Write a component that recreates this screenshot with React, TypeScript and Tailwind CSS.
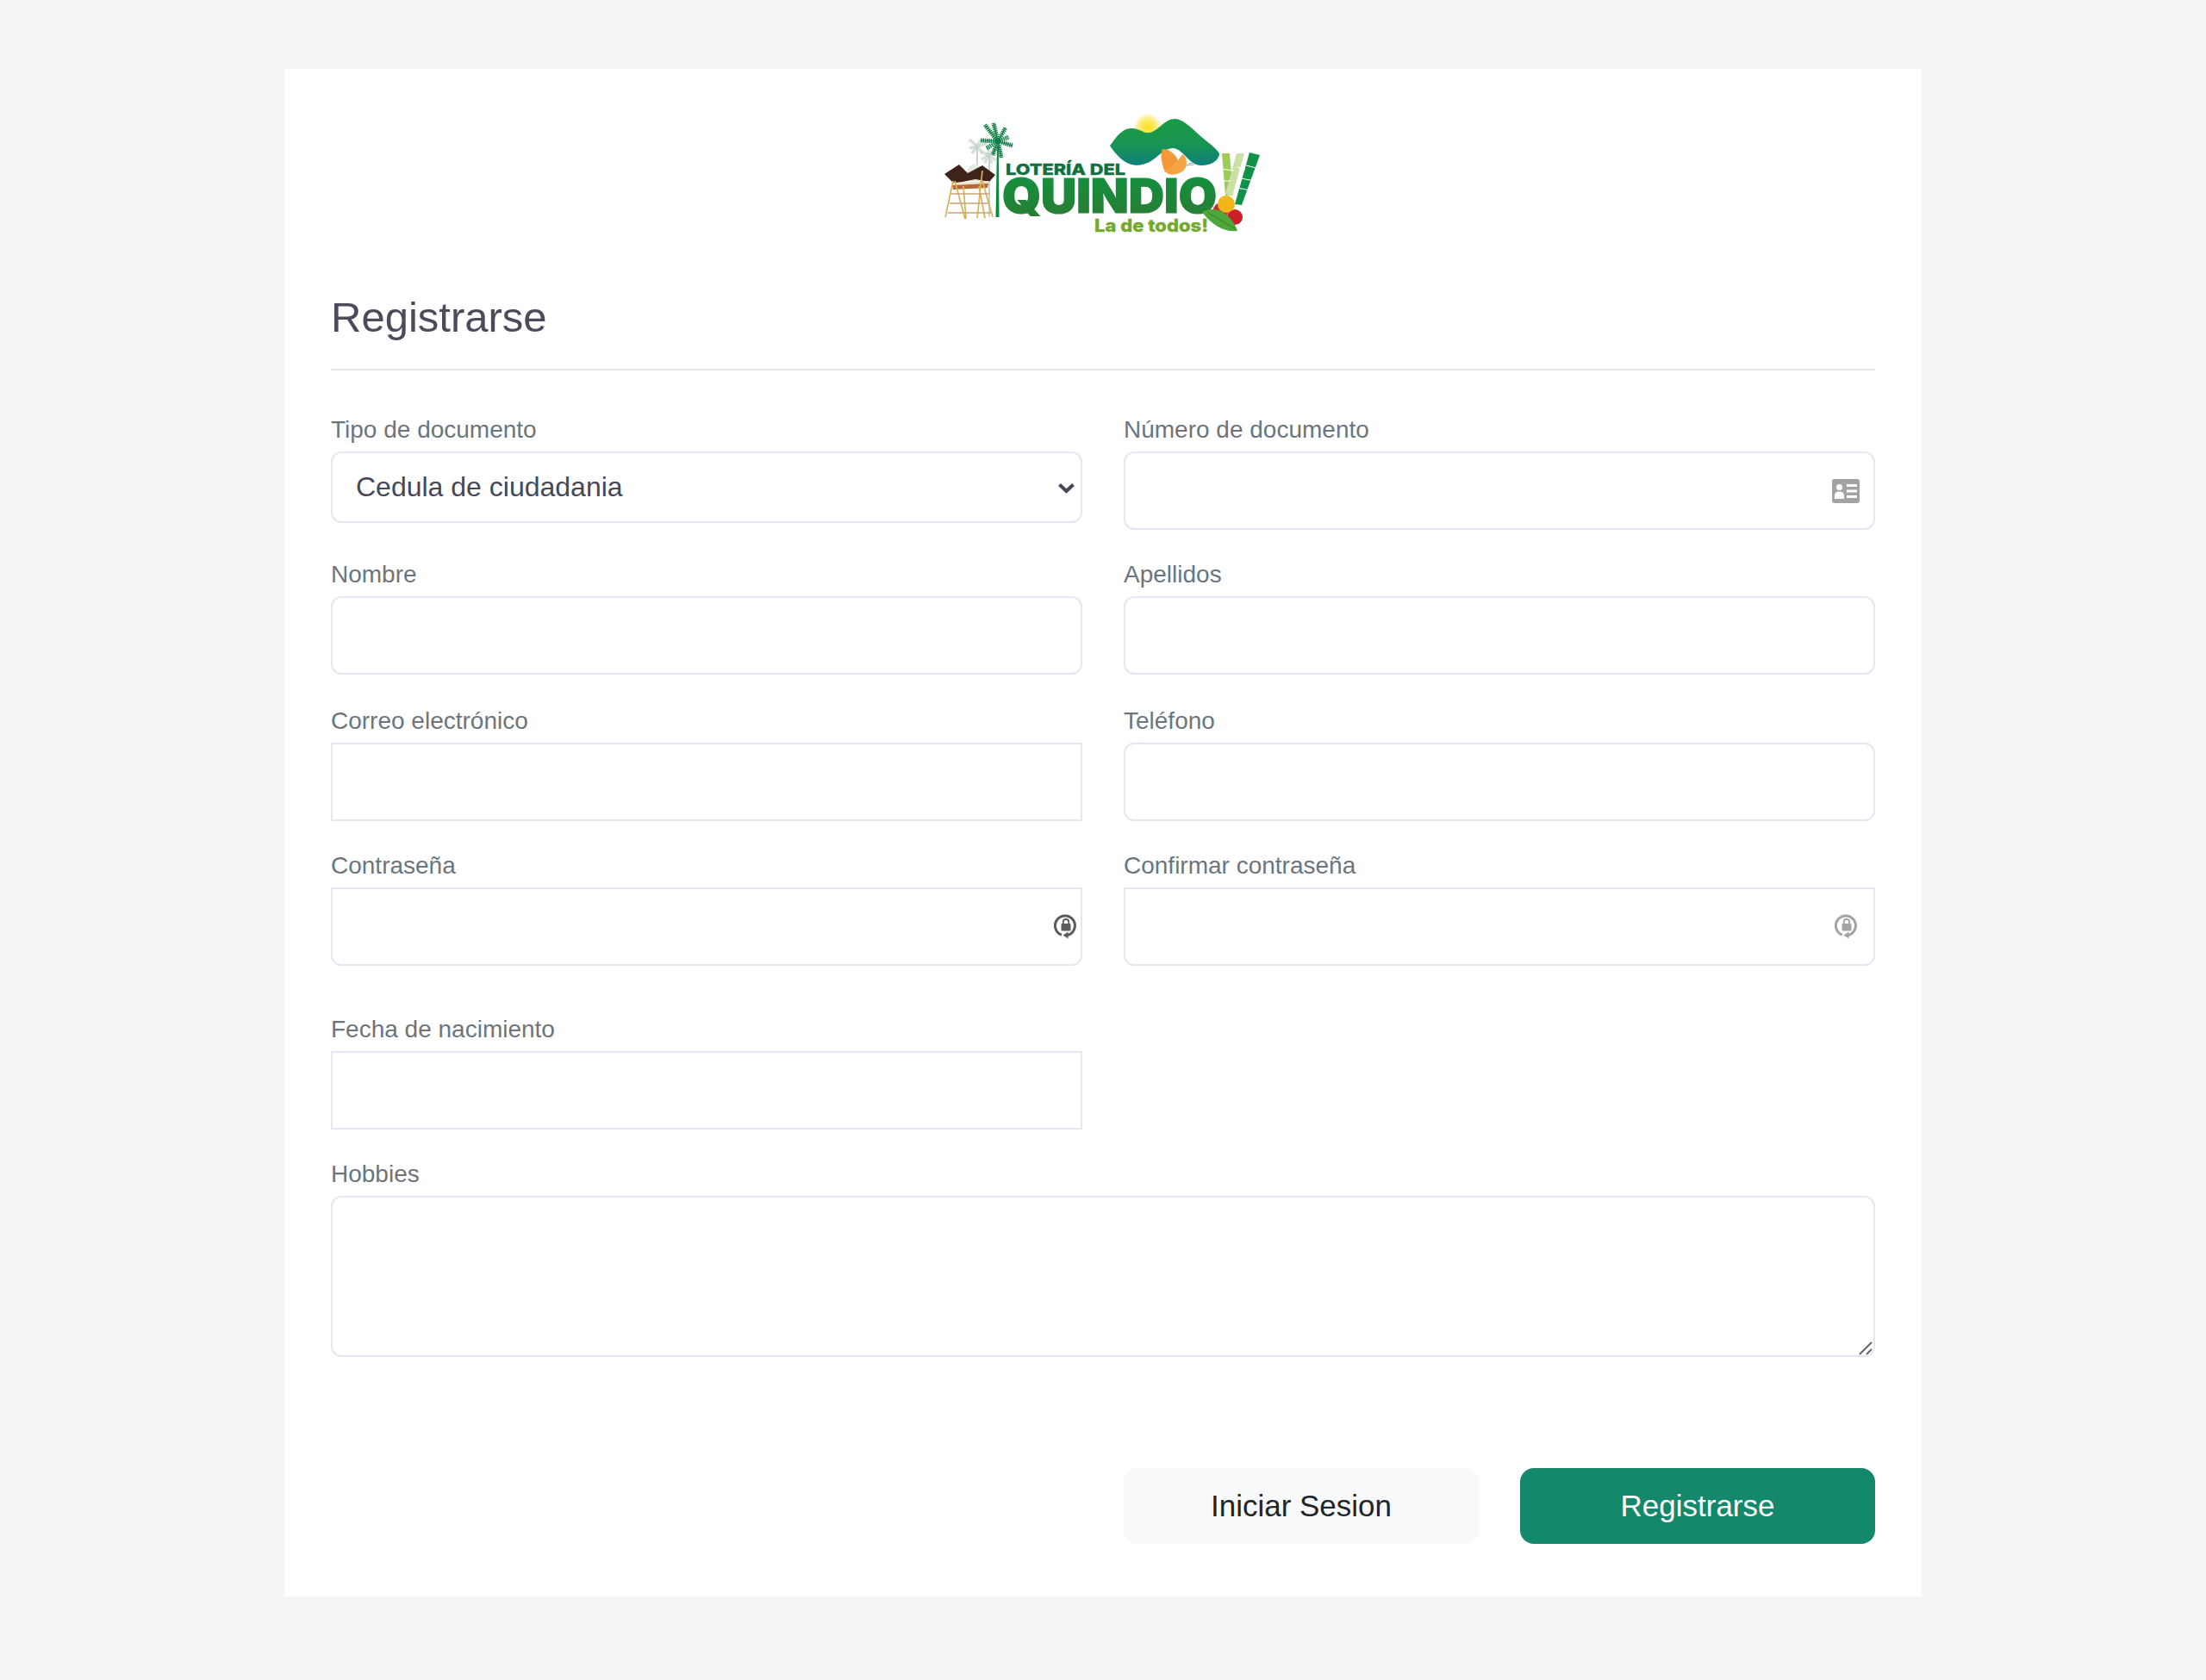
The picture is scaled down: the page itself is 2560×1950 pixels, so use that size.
function Logo() {
  return (
    <svg viewBox="0 0 440 180" className="block mx-auto w-[440px] h-[180px]" aria-label="Lotería del Quindío">
      <defs>
        <linearGradient id="mountain" x1="0" y1="0" x2="0" y2="1">
          <stop offset="0" stopColor="#1b9a45" />
          <stop offset="0.5" stopColor="#189650" />
          <stop offset="1" stopColor="#0f7f7a" />
        </linearGradient>
        <linearGradient id="quindio" x1="0" y1="0" x2="0" y2="1">
          <stop offset="0" stopColor="#0f9440" />
          <stop offset="1" stopColor="#2b7a32" />
        </linearGradient>
        <radialGradient id="sun">
          <stop offset="0" stopColor="#fbe020" />
          <stop offset="0.6" stopColor="#fcec70" />
          <stop offset="1" stopColor="#fffdf0" />
        </radialGradient>
      </defs>

      {/* gray palms */}
      <g stroke="#c3cfc6" fill="none">
        <path d="M74 62 L74 92 M88 70 L88 142" strokeWidth="1.8" />
        <path d="M74 60 L65 52 M74 60 L78 52 M74 60 L85 56 M74 60 L65 62 M74 60 L68 68 M74 60 L80 68 M87 70 L79 66 M87 70 L94 64 M87 70 L79 75 M87 70 L95 76 M87 70 L87 62 M87 70 L83 79 M87 70 L91 80" strokeWidth="3.5" strokeDasharray="1.4 0.7" />
      </g>

      {/* hut */}
      <path d="M60 92 Q70 70 82 90 L78 100 L60 100 Z" fill="#e3e8e2" />
      <path d="M36 92 L53 81 L63 91 L80 82 L95 93 L88 101 L72 98 L47 103 Z" fill="#3d2318" />
      <path d="M45 102 L88 100 L87 103 L46 105 Z" fill="#f0e4d0" />
      <path d="M45 105 L87 103 L86 108 L46 110 Z" fill="#b5683a" />
      <g stroke="#d9b25a" strokeWidth="1.7" fill="none">
        <path d="M46 100 L37 142 M48 100 L60 144 M58 106 L61 144 M80 88 L74 143 M80 100 L92 142 M76 106 L83 143" />
      </g>
      <path d="M44 115 L88 115 M42 126 L88 126 M40 137 L90 137" stroke="#c8a577" strokeWidth="1.3" />

      {/* main palm */}
      <path d="M97 60 L95.5 142 L99.5 142 L98.8 60 Z" fill="#0e8a3f" />
      <g stroke="#117f45" fill="none">
        <path d="M98 54 L83 35 M98 54 L93 33 M98 54 L107 38 M98 54 L78 53 M98 54 L115 59 M98 54 L102 73 M98 54 L92 70 M98 54 L111 49 M98 54 L85 62" strokeWidth="5" strokeDasharray="1.5 0.8" />
        <path d="M98 54 L83 35 M98 54 L93 33 M98 54 L107 38 M98 54 L78 53 M98 54 L115 59 M98 54 L102 73 M98 54 L92 70" strokeWidth="1.2" />
      </g>

      {/* sun and mountain */}
      <circle cx="272" cy="38" r="16" fill="url(#sun)" />
      <path
        d="M228 59 C234 52 240 40 252 39 C262 38 266 45 274 44 C284 42 292 28 303 28 C312 28 320 36 330 45 C338 53 350 60 355 68 C355 76 346 82 334 82 C320 82 314 64 302 62 C292 61 284 72 274 78 C266 82 258 83 250 80 C242 77 232 66 228 59 Z"
        fill="url(#mountain)"
      />

      {/* butterfly */}
      <path d="M289 63 C296 62 306 70 307 77 L304 80 C300 84 296 88 292 90 C288 80 286 70 289 63 Z" fill="#f4983a" />
      <path d="M312 69 C318 72 318 82 315 86 C312 91 302 94 296 92 C292 91 293 87 297 85 C303 82 308 76 312 69 Z" fill="#f5a443" />
      <path d="M315 82 L326 81 M319 80 L325 79" stroke="#a8a8a8" strokeWidth="1.2" />

      {/* text */}
      <text x="107" y="93" fontFamily="Inter, sans-serif" fontWeight="800" fontSize="18" fill="#12703f" stroke="#12703f" strokeWidth="0.4" textLength="139" lengthAdjust="spacingAndGlyphs">LOTERÍA DEL</text>
      <text x="103" y="137" fontFamily="Inter, sans-serif" fontWeight="900" fontSize="55" fill="url(#quindio)" stroke="url(#quindio)" strokeWidth="1.2" textLength="249" lengthAdjust="spacingAndGlyphs">QUINDIO</text>
      <text x="210" y="159" fontFamily="Inter, sans-serif" fontWeight="800" fontSize="20" fill="#74a92c" stroke="#74a92c" strokeWidth="0.3" textLength="132" lengthAdjust="spacingAndGlyphs">La de todos!</text>

      {/* canes */}
      <path d="M358 68 L367 68 L371 116 L362 117 Z" fill="#9ecb55" />
      <path d="M375 68 L384 68 L370 118 L362 115 Z" fill="#cbe0a4" />
      <path d="M390 67 L402 70 L381 128 L373 127 Z" fill="#0f9148" />
      <path d="M356 86 L372 88 M357 100 L368 100 M376 84 L385 87 M386 82 L402 86 M380 97 L396 100 M376 108 L391 111" stroke="#ffffff" strokeWidth="1" />

      {/* fruit and leaf */}
      <circle cx="357" cy="134" r="9" fill="#c92f30" />
      <circle cx="373" cy="142" r="9" fill="#cb2027" />
      <circle cx="363" cy="127" r="10" fill="#f2b618" />
      <path d="M335 136 C350 128 368 136 376 158 C360 160 345 150 335 136 Z" fill="#4fa63a" />
      <path d="M342 137 L374 156" stroke="#2e7d2c" strokeWidth="0.8" />
    </svg>
  );
}

function IdCardIcon() {
  return (
    <svg viewBox="0 0 32 28" className="w-[32px] h-[28px]" fill="#a3a3a3">
      <path fillRule="evenodd" d="M3 0H29A3 3 0 0 1 32 3V25A3 3 0 0 1 29 28H3A3 3 0 0 1 0 25V3A3 3 0 0 1 3 0ZM8.5 6A3.5 3.5 0 1 0 8.5 13A3.5 3.5 0 1 0 8.5 6ZM3 23V19C3 16 5 14.5 8.5 14.5S14 16 14 19V23ZM17 6V9H29V6ZM17 12.5V15.5H29V12.5ZM17 19V22H29V19Z" />
    </svg>
  );
}

function LockResetIcon({ className }: { className: string }) {
  return (
    <svg viewBox="0 0 28 30" className={`w-[28px] h-[30px] ${className}`} fill="none" stroke="currentColor">
      <path d="M9 25.2A11.5 11.5 0 1 1 15 25.7" strokeWidth="3" />
      <path d="M16.5 21.5V29.5L10.5 25.5Z" fill="currentColor" stroke="none" />
      <rect x="8.5" y="12" width="11" height="8.5" rx="1" fill="currentColor" stroke="none" />
      <path d="M10.8 12V10.2A3.2 3.2 0 0 1 17.2 10.2V12" strokeWidth="1.8" />
    </svg>
  );
}

const labelClass = 'block text-[28px] leading-[42px] mb-[4px] text-[#6c757d]';

function Field({ label, icon, corners = 'rounded-[12px]' }: { label: string; icon?: React.ReactNode; corners?: string }) {
  return (
    <div>
      <label className={labelClass}>{label}</label>
      <div className="relative">
        <input type="text" className={`block w-full h-[91px] bg-white border-2 border-[#e3e7f3] outline-none ${corners}`} />
        {icon}
      </div>
    </div>
  );
}

export default function App() {
  return (
    <div className="min-h-[1950px] bg-[#f5f5f5] pt-[80px] font-['Liberation_Sans',Arial,sans-serif]">
      <div className="w-[1900px] h-[1773px] mx-auto bg-white px-[54px] pt-[30px]">
        <Logo />

        <h1 className="mt-[49px] text-[49px] leading-[58px] text-[#4a4c5c] pb-[31px] border-b-2 border-[#e5e5e5]">Registrarse</h1>

        <div className="mt-[48px] grid grid-cols-2 gap-x-[48px] items-start">
          <div>
            <label className={labelClass}>Tipo de documento</label>
            <div className="relative">
              <select className="block w-full h-[83px] appearance-none bg-white border-2 border-[#e3e7f3] rounded-[12px] pl-[27px] pb-[2px] text-[32px] text-[#454857] outline-none">
                <option>Cedula de ciudadania</option>
              </select>
              <svg viewBox="0 0 19 12" className="absolute right-[9px] top-[37px] w-[19px] h-[12px]" fill="none" stroke="#454857" strokeWidth="4">
                <path d="M1.5 1.5L9.5 9L17.5 1.5" />
              </svg>
            </div>
          </div>
          <Field
            label="Número de documento"
            icon={<span className="absolute right-[18px] top-[32px]"><IdCardIcon /></span>}
          />
        </div>

        <div className="mt-[31px] grid grid-cols-2 gap-x-[48px]">
          <Field label="Nombre" />
          <Field label="Apellidos" />
        </div>

        <div className="mt-[33px] grid grid-cols-2 gap-x-[48px]">
          <Field label="Correo electrónico" corners="rounded-none" />
          <Field label="Teléfono" />
        </div>

        <div className="mt-[31px] grid grid-cols-2 gap-x-[48px]">
          <Field
            label="Contraseña"
            corners="rounded-b-[12px]"
            icon={<span className="absolute right-[5px] top-[30px]"><LockResetIcon className="text-[#5c5c5c]" /></span>}
          />
          <Field
            label="Confirmar contraseña"
            corners="rounded-b-[12px]"
            icon={<span className="absolute right-[19px] top-[30px]"><LockResetIcon className="text-[#a3a3a3]" /></span>}
          />
        </div>

        <div className="mt-[53px] grid grid-cols-2 gap-x-[48px]">
          <Field label="Fecha de nacimiento" corners="rounded-none" />
        </div>

        <div className="mt-[31px]">
          <label className={labelClass}>Hobbies</label>
          <div className="relative">
            <textarea className="block w-full h-[187px] resize-none bg-white border-2 border-[#e3e7f3] rounded-[12px] outline-none" />
            <svg viewBox="0 0 16 16" className="absolute right-[3px] bottom-[2px] w-[16px] h-[16px]" stroke="#666666" strokeWidth="2" fill="none">
              <path d="M1 15L15 1M9 15L15 9" />
            </svg>
          </div>
        </div>

        <div className="mt-[129px] grid grid-cols-2 gap-x-[48px]">
          <div />
          <div className="flex gap-[48px]">
            <button className="flex-1 h-[88px] rounded-[16px] bg-[#f8f9fa] text-[35px] text-[#212529]">Iniciar Sesion</button>
            <button className="flex-1 h-[88px] rounded-[16px] bg-[#13886a] text-[35px] text-white">Registrarse</button>
          </div>
        </div>
      </div>
    </div>
  );
}
